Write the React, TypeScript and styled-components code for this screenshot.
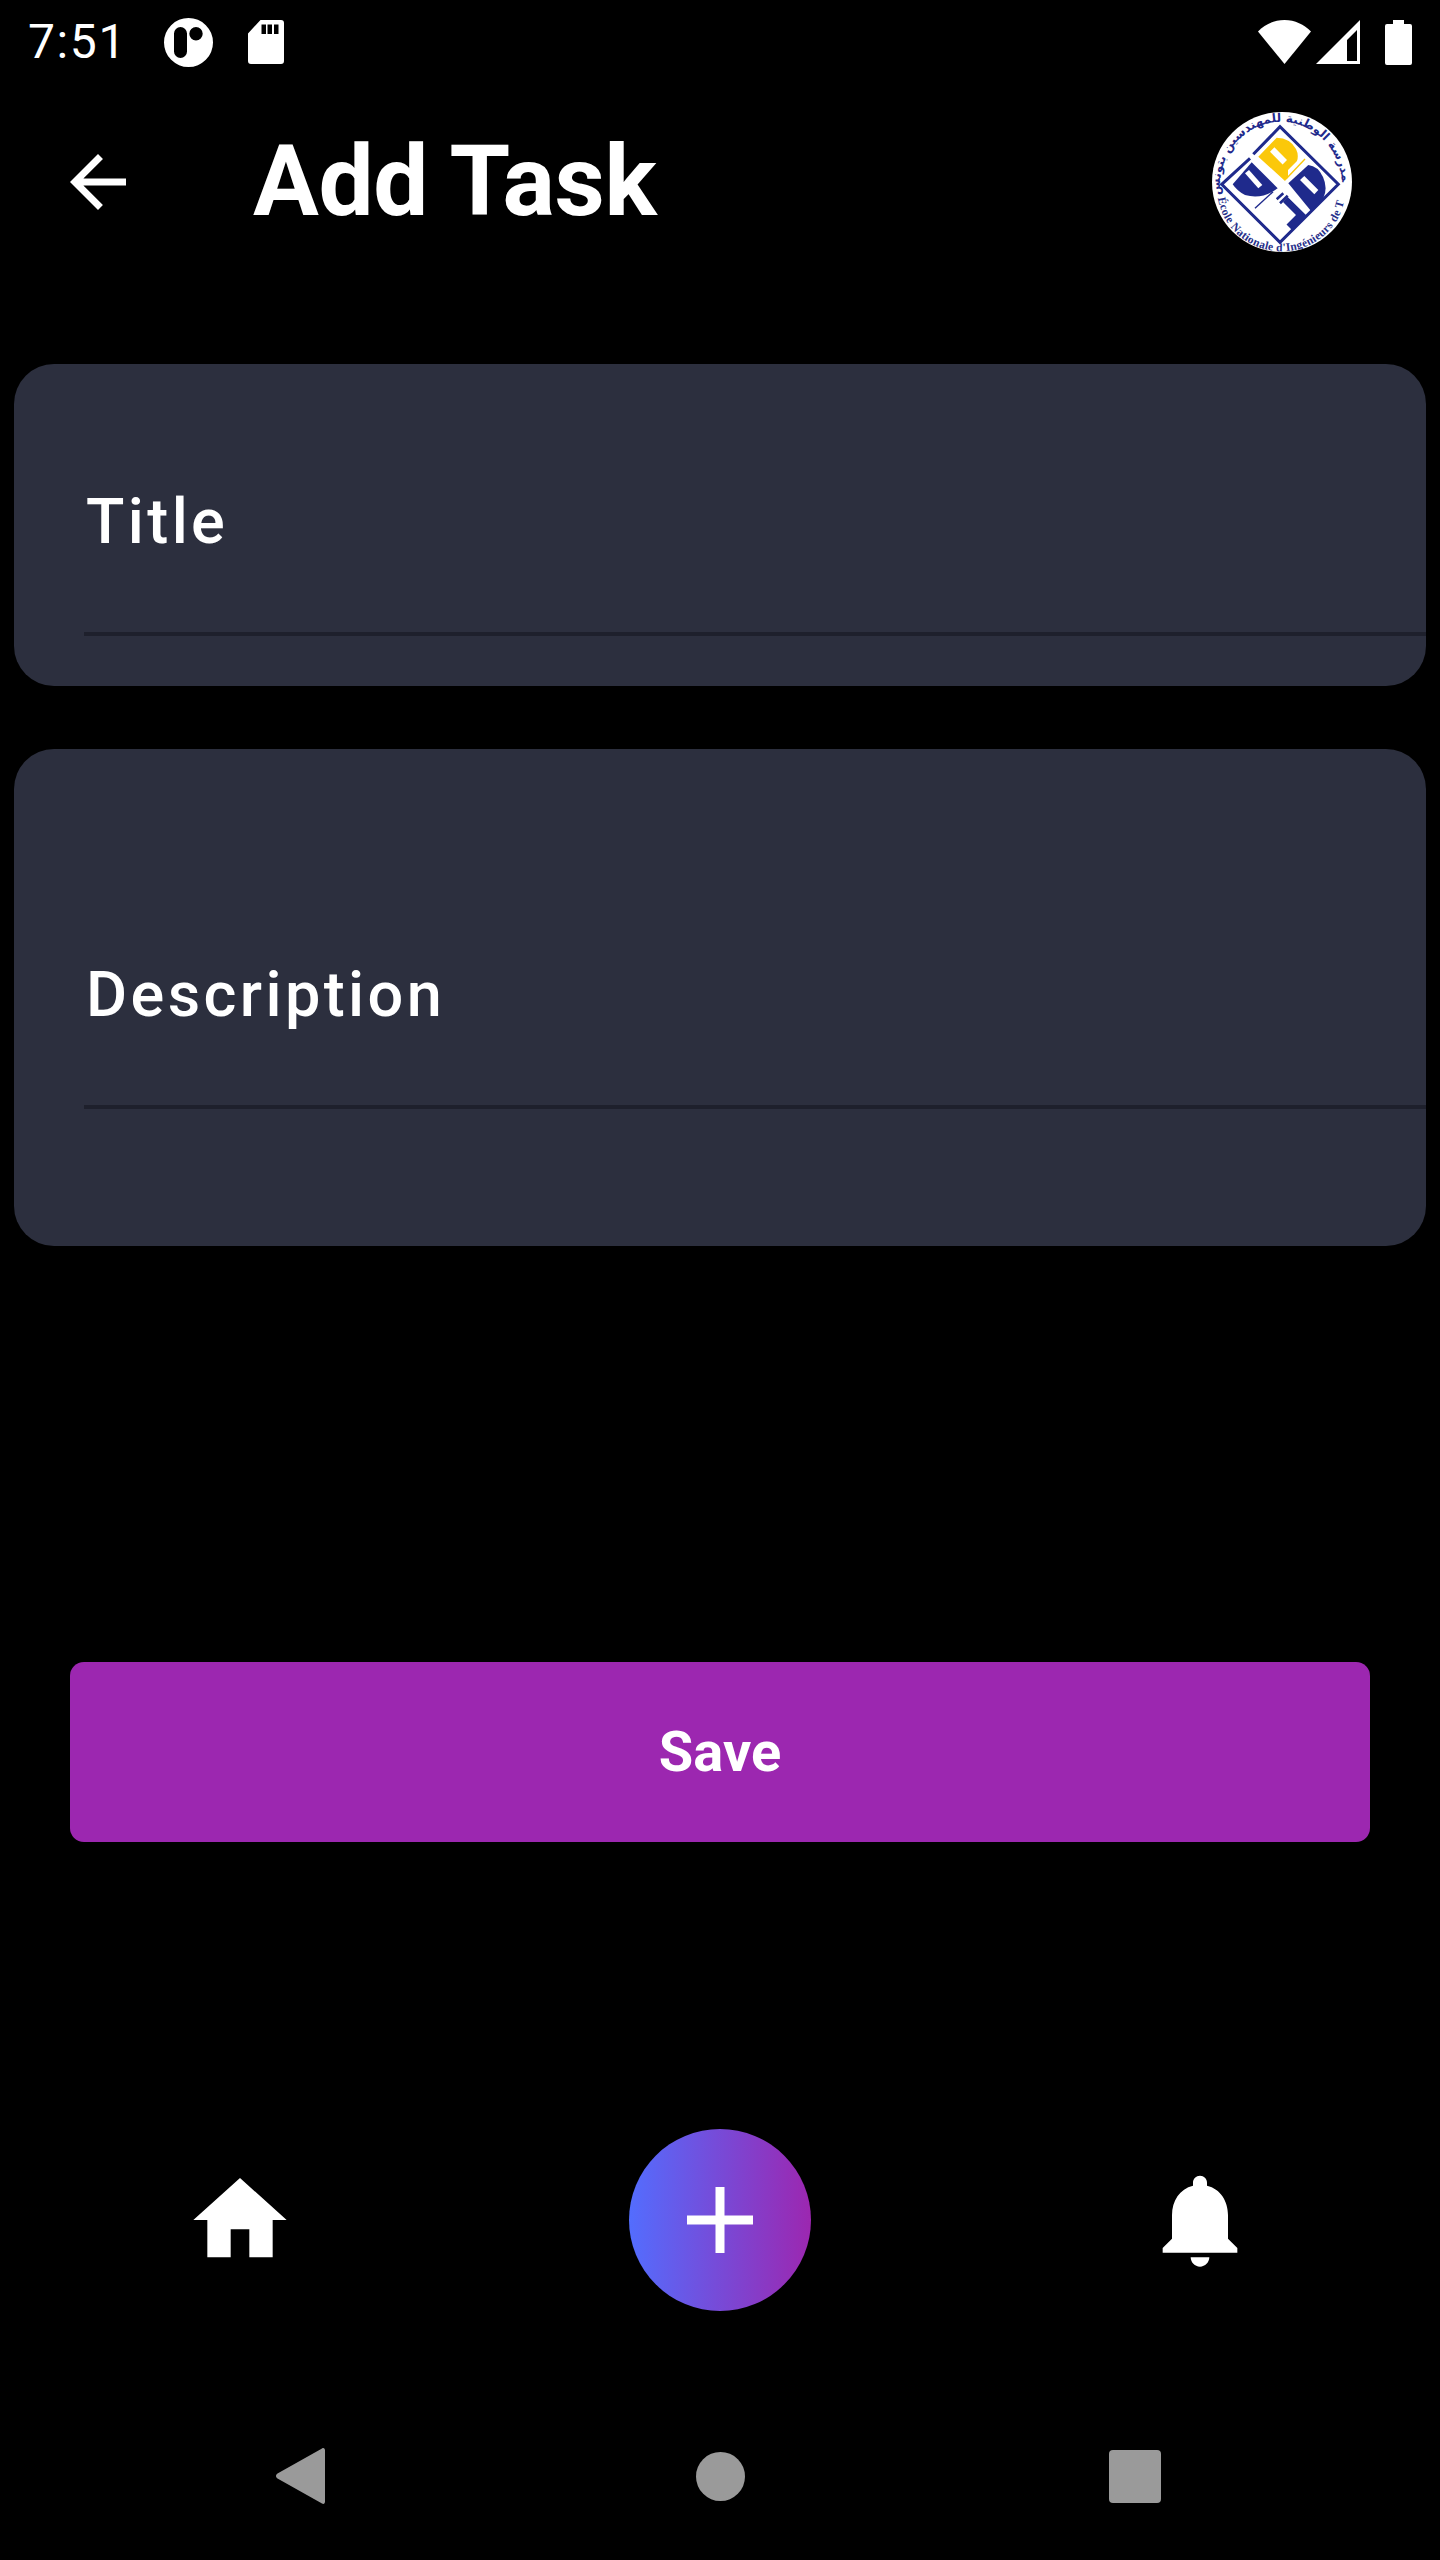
import React, { ReactElement } from 'react';
import styled, { createGlobalStyle } from 'styled-components';

const GlobalStyle = createGlobalStyle`
  html, body {
    margin: 0;
    padding: 0;
    background: #000;
  }
`;

const Screen = styled.div`
  width: 1440px;
  height: 2560px;
  display: flex;
  flex-direction: column;
  overflow: hidden;
  background: #000;
  color: #fff;
  font-family: Roboto, "Liberation Sans", sans-serif;
`;

const StatusBar = styled.div`
  height: 84px;
  padding: 0 28px;
  box-sizing: border-box;
  display: flex;
  align-items: center;
  justify-content: space-between;
`;

const StatusGroup = styled.div`
  display: flex;
  align-items: center;
`;

const Clock = styled.span`
  width: 136px;
  font-size: 48px;
  line-height: 84px;
  letter-spacing: 1.6px;
`;

const StatusIcon = styled.svg<{ $gap?: number }>`
  display: block;
  margin-right: ${(p) => p.$gap ?? 0}px;
  fill: #fff;
`;

const Header = styled.header`
  height: 196px;
  padding: 0 88px 0 56px;
  display: flex;
  align-items: center;
`;

const BackIcon = styled.svg`
  width: 84px;
  height: 84px;
  fill: #fff;
  flex: none;
`;

const Title = styled.h1`
  flex: 1;
  margin: 0 0 0 113px;
  font-size: 98px;
  line-height: 1;
  font-weight: 700;
  letter-spacing: -0.4px;
`;

const Logo = styled.svg`
  width: 140px;
  height: 140px;
  flex: none;
  display: block;
`;

const Form = styled.div`
  padding: 84px 14px 0;
  display: flex;
  flex-direction: column;
  gap: 63px;
`;

const Card = styled.div<{ $height: number; $bottom: number }>`
  height: ${(p) => p.$height}px;
  box-sizing: border-box;
  padding: 0 0 ${(p) => p.$bottom}px 70px;
  display: flex;
  flex-direction: column;
  justify-content: flex-end;
  background: #2c2f3e;
  border-radius: 40px;
`;

const Field = styled.div`
  padding: 0 0 73px 2px;
  border-bottom: 4px solid #1e202c;
  font-size: 63px;
  line-height: 74px;
  font-weight: 500;
  letter-spacing: 3.4px;
`;

const SaveButton = styled.button`
  display: block;
  width: 1300px;
  height: 180px;
  margin: 416px 0 0 70px;
  padding: 0;
  border: 0;
  border-radius: 14px;
  background: #9c27b0;
  color: #fff;
  font-family: inherit;
  font-size: 56px;
  font-weight: 700;
`;

const TabBar = styled.nav`
  margin-top: 287px;
  height: 182px;
  display: grid;
  grid-template-columns: repeat(3, 480px);
  justify-items: center;
  align-items: center;
`;

const TabIcon = styled.svg`
  width: 112px;
  height: 112px;
  fill: #fff;
`;

const Fab = styled.button`
  width: 182px;
  height: 182px;
  padding: 0;
  border: 0;
  border-radius: 50%;
  display: flex;
  align-items: center;
  justify-content: center;
  background: linear-gradient(90deg, #536dfe, #9c27b0);
`;

const PlusIcon = styled.svg`
  width: 66px;
  height: 66px;
  fill: #fff;
`;

const SystemNav = styled.div`
  margin-top: 137px;
  height: 56px;
  display: grid;
  grid-template-columns: 600px 240px 600px;
  align-items: center;
`;

const NavSlot = styled.div<{ $align: string; $left?: number; $right?: number }>`
  display: flex;
  justify-content: ${(p) => p.$align};
  padding-left: ${(p) => p.$left ?? 0}px;
  padding-right: ${(p) => p.$right ?? 0}px;
`;

const NavIcon = styled.svg`
  display: block;
  fill: #9a9a9a;
`;

const EnitLogo = (): ReactElement => (
  <Logo viewBox="0 0 140 140">
    <defs>
      <clipPath id="logo-clip">
        <circle cx="70" cy="70" r="70" />
      </clipPath>
      <path id="logo-top" d="M 8 76 A 60 63 0 0 1 130 72" />
      <path id="logo-bottom" d="M 6 86 A 64 62 0 0 0 132 90" />
    </defs>
    <g clipPath="url(#logo-clip)">
      <rect width="140" height="140" fill="#fff" />
      <text fontFamily="'DejaVu Sans', sans-serif" fontSize="12" fontWeight="700" fill="#1f2a8c">
        <textPath href="#logo-top" startOffset="50%" textAnchor="middle">
          المدرسة الوطنية للمهندسين بتونس
        </textPath>
      </text>
      <text fontFamily="'Liberation Serif', serif" fontSize="11.500" fontWeight="700" fill="#27308a" letterSpacing="0.3">
        <textPath href="#logo-bottom">
          École Nationale d'Ingénieurs de Tunis
        </textPath>
      </text>
      <path d="M41.300 42.300 L68 14.700 L126.300 72.300 L68 130.300 L9.700 72.300 L38 46.300" fill="none" stroke="#1f2a8c" strokeWidth="3" />
      <path d="M46.300 44.700 L64.700 25.700 Q78 26 84 37 Q87 43 85 49 L76 58 L76 65 L73 69 Z" fill="#fbc80a" />
      <path d="M58 39.700 L62.400 35.300 L75 48 L70.600 52.400 Z" fill="#fff" />
      <path d="M74 67 L93 47" stroke="#fbc80a" strokeWidth="1.400" />
      <path d="M20.700 72.300 L39.700 50.300 L65.700 76.300 Q50 88 33 83 Q25 79 20.700 72.300 Z" fill="#1f2a8c" />
      <path d="M33 61.300 L37 58 L50.300 73 L46.300 76.300 Z" fill="#fff" />
      <path d="M43 96.300 L61 79.700" stroke="#1f2a8c" strokeWidth="1.400" />
      <path d="M76.300 71.300 L96.300 53 Q106 54 111 65 Q116 76 111.300 86.300 L99 99 Z" fill="#1f2a8c" />
      <path d="M88 68 L92.300 64 L106.300 78 L102.300 82.300 Z" fill="#fff" />
      <path d="M64.700 87.300 L71.300 81.300 M68 91.300 L75.700 83.700" stroke="#1f2a8c" strokeWidth="2.600" fill="none" />
      <path d="M75.700 85 L95 104 L80 118 L74.500 112.500 L84 103 L71 90 Z" fill="#1f2a8c" />
    </g>
  </Logo>
);

const App = (): ReactElement => (
  <>
    <GlobalStyle />
    <Screen>
      <StatusBar>
        <StatusGroup>
          <Clock>7:51</Clock>
          <StatusIcon $gap={35} width="49" height="49" viewBox="0 0 49 49">
            <path
              fillRule="evenodd"
              d="M24.500 0a24.500 24.500 0 1 0 0 49 24.500 24.500 0 0 0 0-49zM16.500 9a6.500 6.500 0 0 0-6.500 6.500v18a6.500 6.500 0 0 0 13 0v-18A6.500 6.500 0 0 0 16.500 9zM32 9a6.700 6.700 0 1 0 0 13.400A6.700 6.700 0 0 0 32 9z"
            />
          </StatusIcon>
          <StatusIcon width="36" height="44" viewBox="0 0 36 44">
            <path
              fillRule="evenodd"
              d="M12.500 0H33a3 3 0 0 1 3 3v38a3 3 0 0 1-3 3H3a3 3 0 0 1-3-3V13.500zM13.500 4.500V14H18V4.500zm6 0V14H24V4.500zm6.500 0V14h4.500V4.500z"
            />
          </StatusIcon>
        </StatusGroup>
        <StatusGroup>
          <StatusIcon $gap={5} width="53" height="44" viewBox="0 0 53 44">
            <path d="M26.500 44L0 11.500C7 4.500 16 0 26.500 0S46 4.500 53 11.500z" />
          </StatusIcon>
          <StatusIcon $gap={25} width="44" height="44" viewBox="0 0 44 44">
            <path fillRule="evenodd" d="M44 0v44H0zM41 10L31 20v21h10z" />
          </StatusIcon>
          <StatusIcon width="27" height="45" viewBox="0 0 27 45">
            <path d="M8 0h11v4h6a2 2 0 0 1 2 2v37a2 2 0 0 1-2 2H2a2 2 0 0 1-2-2V6a2 2 0 0 1 2-2h6z" />
          </StatusIcon>
        </StatusGroup>
      </StatusBar>

      <Header>
        <BackIcon viewBox="0 0 24 24">
          <path d="M20 11H7.830l5.590-5.590L12 4l-8 8 8 8 1.410-1.410L7.830 13H20v-2z" />
        </BackIcon>
        <Title>Add Task</Title>
        <EnitLogo />
      </Header>

      <Form>
        <Card $height={322} $bottom={50}>
          <Field>Title</Field>
        </Card>
        <Card $height={497} $bottom={137}>
          <Field>Description</Field>
        </Card>
      </Form>

      <SaveButton>Save</SaveButton>

      <TabBar>
        <TabIcon viewBox="0 0 24 24">
          <path d="M10 20v-6h4v6h5v-8h3L12 3 2 12h3v8z" />
        </TabIcon>
        <Fab>
          <PlusIcon viewBox="0 0 66 66">
            <path d="M28.500 0h9v28.500H66v9H37.500V66h-9V37.500H0v-9h28.500z" />
          </PlusIcon>
        </Fab>
        <TabIcon viewBox="0 0 24 24">
          <path d="M12 22c1.100 0 2-.9 2-2h-4c0 1.100.89 2 2 2zm6-6v-5c0-3.070-1.640-5.640-4.500-6.320V4c0-.83-.67-1.500-1.500-1.500s-1.500.67-1.500 1.500v.68C7.630 5.360 6 7.920 6 11v5l-2 2v1h16v-1l-2-2z" />
        </TabIcon>
      </TabBar>

      <SystemNav>
        <NavSlot $align="flex-start" $left={276}>
          <NavIcon width="49" height="56" viewBox="0 0 49 56">
            <path d="M46 0.500c1.700-1 3 0 3 2v51c0 2-1.300 3-3 2L1.500 30.500c-2-1.300-2-3.700 0-5z" />
          </NavIcon>
        </NavSlot>
        <NavSlot $align="center">
          <NavIcon width="49" height="49" viewBox="0 0 49 49">
            <circle cx="24.500" cy="24.500" r="24.500" />
          </NavIcon>
        </NavSlot>
        <NavSlot $align="flex-end" $right={279}>
          <NavIcon width="52" height="53" viewBox="0 0 52 53">
            <rect width="52" height="53" rx="4" />
          </NavIcon>
        </NavSlot>
      </SystemNav>
    </Screen>
  </>
);

export default App;
